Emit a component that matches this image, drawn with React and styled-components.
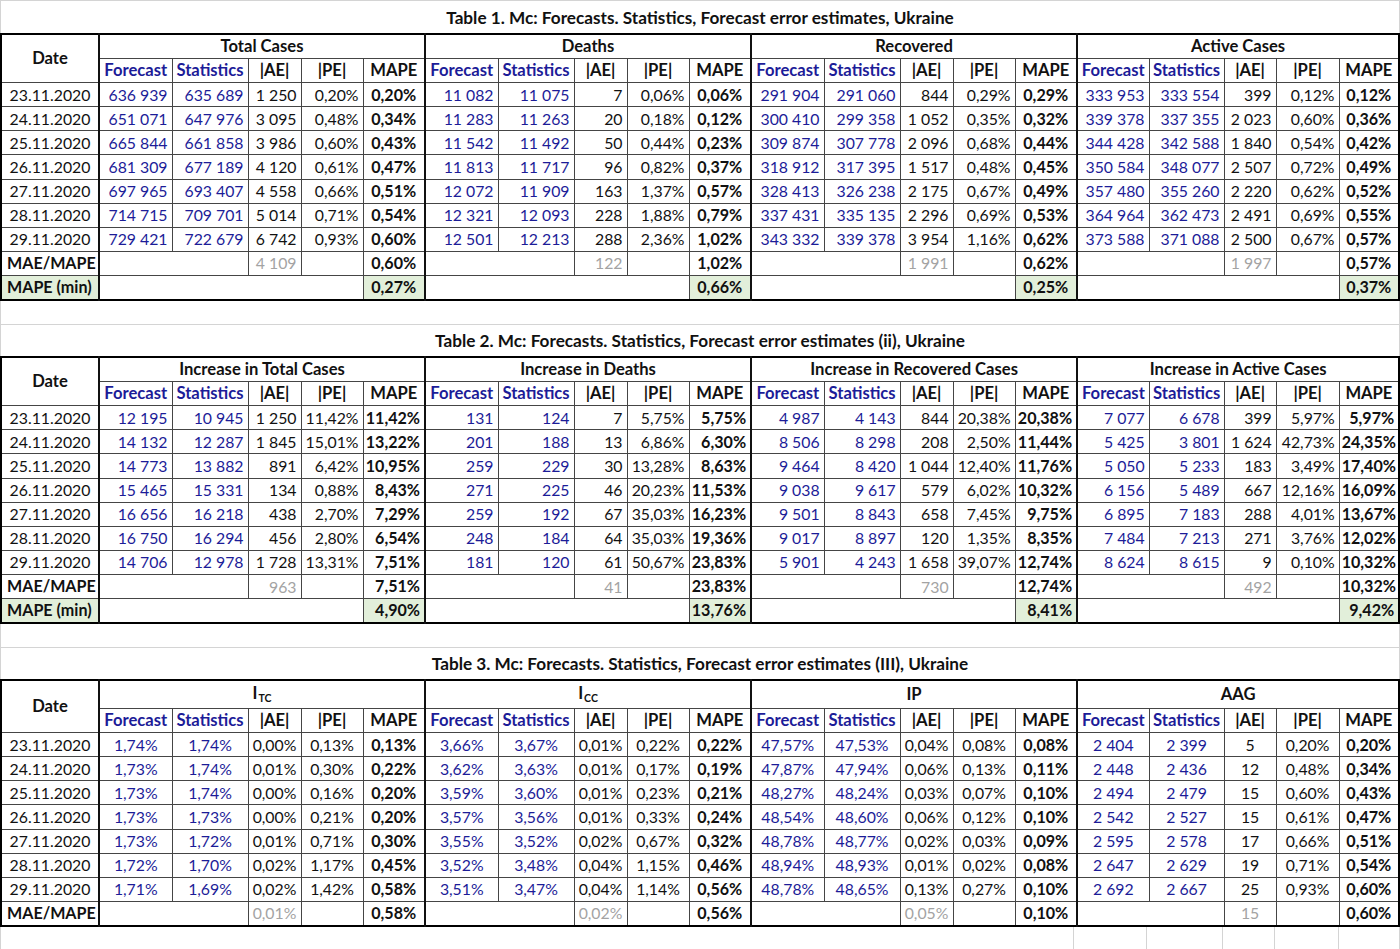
import React from "react";
import styled, { createGlobalStyle } from "styled-components";

const GlobalStyle = createGlobalStyle`
  body {
    margin: 0;
    background: #fff;
    font-family: Lato, "Noto Sans", sans-serif;
    color: #111;
  }
`;

const tones = {
  ink: "#111111",
  blue: "#1c1c98",
  gray: "#a3a3a3",
};

const widths = [
  [73, 76, 53, 62, 62],
  [73, 76, 53, 62, 62],
  [73, 76, 53, 62, 62],
  [72, 75, 52, 63, 60],
];

const Sheet = styled.div`
  width: 1398px;
  border-top: 1px solid #d4d4d4;
  border-left: 1px solid #d4d4d4;
  border-right: 1px solid #d4d4d4;
`;

const TitleBar = styled.div`
  height: ${(p) => p.$h}px;
  display: flex;
  align-items: center;
  justify-content: center;
  font-size: 17.2px;
  font-weight: 700;
`;

const Gap = styled.div`
  height: 23px;
  border-bottom: 1px solid #d4d4d4;
`;

const Grid = styled.table`
  width: 1398px;
  margin-left: -1px;
  border-collapse: collapse;
  table-layout: fixed;
  border: 2px solid #000;
  font-size: 15.8px;
`;

const Cell = styled.td`
  height: ${(p) => p.$h || 23.1}px;
  padding: 0 ${(p) => (p.$align === "right" ? 4 : 2)}px 0 ${(p) => (p.$align === "left" ? 5 : 2)}px;
  border: 1px solid #454545;
  border-left: ${(p) => (p.$edge ? "2px solid #111" : "1px solid #454545")};
  text-align: ${(p) => p.$align || "center"};
  color: ${(p) => tones[p.$tone || "ink"]};
  font-weight: ${(p) => (p.$bold ? 700 : 400)};
  font-size: ${(p) => (p.$bold ? 16.1 : 15.8)}px;
  background: ${(p) => (p.$green ? "#e2efda" : "transparent")};
  white-space: nowrap;
  overflow: hidden;
  line-height: 1;
`;

const HeadCell = styled(Cell).attrs({ as: "th", $bold: true })`
  font-size: 16.6px;
`;

const Sub = styled.sub`
  font-size: 10.5px;
  vertical-align: -3px;
  margin-left: 1px;
`;

const Tail = styled.div`
  height: 24px;
  display: flex;
  border-bottom: 1px solid #d4d4d4;
`;

const TailSpacer = styled.div`
  width: 1076px;
`;

const TailCell = styled.div`
  width: ${(p) => p.$w}px;
  border-left: 1px solid #d4d4d4;
`;

const split = (s) => s.split("|");

const dates = [
  "23.11.2020",
  "24.11.2020",
  "25.11.2020",
  "26.11.2020",
  "27.11.2020",
  "28.11.2020",
  "29.11.2020",
];

const table1 = {
  title: "Table 1. Mc: Forecasts. Statistics, Forecast error estimates, Ukraine",
  align: "right",
  mapeAlign: "center",
  groups: [
    {
      name: "Total Cases",
      rows: [
        "636 939|635 689|1 250|0,20%|0,20%",
        "651 071|647 976|3 095|0,48%|0,34%",
        "665 844|661 858|3 986|0,60%|0,43%",
        "681 309|677 189|4 120|0,61%|0,47%",
        "697 965|693 407|4 558|0,66%|0,51%",
        "714 715|709 701|5 014|0,71%|0,54%",
        "729 421|722 679|6 742|0,93%|0,60%",
      ],
      mae: "4 109",
      mape: "0,60%",
      min: "0,27%",
    },
    {
      name: "Deaths",
      rows: [
        "11 082|11 075|7|0,06%|0,06%",
        "11 283|11 263|20|0,18%|0,12%",
        "11 542|11 492|50|0,44%|0,23%",
        "11 813|11 717|96|0,82%|0,37%",
        "12 072|11 909|163|1,37%|0,57%",
        "12 321|12 093|228|1,88%|0,79%",
        "12 501|12 213|288|2,36%|1,02%",
      ],
      mae: "122",
      mape: "1,02%",
      min: "0,66%",
    },
    {
      name: "Recovered",
      rows: [
        "291 904|291 060|844|0,29%|0,29%",
        "300 410|299 358|1 052|0,35%|0,32%",
        "309 874|307 778|2 096|0,68%|0,44%",
        "318 912|317 395|1 517|0,48%|0,45%",
        "328 413|326 238|2 175|0,67%|0,49%",
        "337 431|335 135|2 296|0,69%|0,53%",
        "343 332|339 378|3 954|1,16%|0,62%",
      ],
      mae: "1 991",
      mape: "0,62%",
      min: "0,25%",
    },
    {
      name: "Active Cases",
      rows: [
        "333 953|333 554|399|0,12%|0,12%",
        "339 378|337 355|2 023|0,60%|0,36%",
        "344 428|342 588|1 840|0,54%|0,42%",
        "350 584|348 077|2 507|0,72%|0,49%",
        "357 480|355 260|2 220|0,62%|0,52%",
        "364 964|362 473|2 491|0,69%|0,55%",
        "373 588|371 088|2 500|0,67%|0,57%",
      ],
      mae: "1 997",
      mape: "0,57%",
      min: "0,37%",
    },
  ],
};

const table2 = {
  title: "Table 2. Mc: Forecasts. Statistics, Forecast error estimates (ii), Ukraine",
  align: "right",
  mapeAlign: "right",
  groups: [
    {
      name: "Increase in Total Cases",
      rows: [
        "12 195|10 945|1 250|11,42%|11,42%",
        "14 132|12 287|1 845|15,01%|13,22%",
        "14 773|13 882|891|6,42%|10,95%",
        "15 465|15 331|134|0,88%|8,43%",
        "16 656|16 218|438|2,70%|7,29%",
        "16 750|16 294|456|2,80%|6,54%",
        "14 706|12 978|1 728|13,31%|7,51%",
      ],
      mae: "963",
      mape: "7,51%",
      min: "4,90%",
    },
    {
      name: "Increase in Deaths",
      rows: [
        "131|124|7|5,75%|5,75%",
        "201|188|13|6,86%|6,30%",
        "259|229|30|13,28%|8,63%",
        "271|225|46|20,23%|11,53%",
        "259|192|67|35,03%|16,23%",
        "248|184|64|35,03%|19,36%",
        "181|120|61|50,67%|23,83%",
      ],
      mae: "41",
      mape: "23,83%",
      min: "13,76%",
    },
    {
      name: "Increase in Recovered Cases",
      rows: [
        "4 987|4 143|844|20,38%|20,38%",
        "8 506|8 298|208|2,50%|11,44%",
        "9 464|8 420|1 044|12,40%|11,76%",
        "9 038|9 617|579|6,02%|10,32%",
        "9 501|8 843|658|7,45%|9,75%",
        "9 017|8 897|120|1,35%|8,35%",
        "5 901|4 243|1 658|39,07%|12,74%",
      ],
      mae: "730",
      mape: "12,74%",
      min: "8,41%",
    },
    {
      name: "Increase in Active Cases",
      rows: [
        "7 077|6 678|399|5,97%|5,97%",
        "5 425|3 801|1 624|42,73%|24,35%",
        "5 050|5 233|183|3,49%|17,40%",
        "6 156|5 489|667|12,16%|16,09%",
        "6 895|7 183|288|4,01%|13,67%",
        "7 484|7 213|271|3,76%|12,02%",
        "8 624|8 615|9|0,10%|10,32%",
      ],
      mae: "492",
      mape: "10,32%",
      min: "9,42%",
    },
  ],
};

const table3 = {
  title: "Table 3. Mc: Forecasts. Statistics, Forecast error estimates (III), Ukraine",
  align: "center",
  mapeAlign: "center",
  headH: 27,
  groups: [
    {
      name: (
        <>
          I<Sub>TC</Sub>
        </>
      ),
      rows: [
        "1,74%|1,74%|0,00%|0,13%|0,13%",
        "1,73%|1,74%|0,01%|0,30%|0,22%",
        "1,73%|1,74%|0,00%|0,16%|0,20%",
        "1,73%|1,73%|0,00%|0,21%|0,20%",
        "1,73%|1,72%|0,01%|0,71%|0,30%",
        "1,72%|1,70%|0,02%|1,17%|0,45%",
        "1,71%|1,69%|0,02%|1,42%|0,58%",
      ],
      mae: "0,01%",
      mape: "0,58%",
    },
    {
      name: (
        <>
          I<Sub>CC</Sub>
        </>
      ),
      rows: [
        "3,66%|3,67%|0,01%|0,22%|0,22%",
        "3,62%|3,63%|0,01%|0,17%|0,19%",
        "3,59%|3,60%|0,01%|0,23%|0,21%",
        "3,57%|3,56%|0,01%|0,33%|0,24%",
        "3,55%|3,52%|0,02%|0,67%|0,32%",
        "3,52%|3,48%|0,04%|1,15%|0,46%",
        "3,51%|3,47%|0,04%|1,14%|0,56%",
      ],
      mae: "0,02%",
      mape: "0,56%",
    },
    {
      name: "IP",
      rows: [
        "47,57%|47,53%|0,04%|0,08%|0,08%",
        "47,87%|47,94%|0,06%|0,13%|0,11%",
        "48,27%|48,24%|0,03%|0,07%|0,10%",
        "48,54%|48,60%|0,06%|0,12%|0,10%",
        "48,78%|48,77%|0,02%|0,03%|0,09%",
        "48,94%|48,93%|0,01%|0,02%|0,08%",
        "48,78%|48,65%|0,13%|0,27%|0,10%",
      ],
      mae: "0,05%",
      mape: "0,10%",
    },
    {
      name: "AAG",
      rows: [
        "2 404|2 399|5|0,20%|0,20%",
        "2 448|2 436|12|0,48%|0,34%",
        "2 494|2 479|15|0,60%|0,43%",
        "2 542|2 527|15|0,61%|0,47%",
        "2 595|2 578|17|0,66%|0,51%",
        "2 647|2 629|19|0,71%|0,54%",
        "2 692|2 667|25|0,93%|0,60%",
      ],
      mae: "15",
      mape: "0,60%",
    },
  ],
};

const subHeads = ["Forecast", "Statistics", "|AE|", "|PE|", "MAPE"];

const ErrorTable = ({ data }) => {
  const { align, mapeAlign, groups } = data;
  const hasMin = groups[0].min !== undefined;
  return (
    <Grid>
      <colgroup>
        <col style={{ width: 98 }} />
        {widths.flat().map((w, i) => (
          <col key={i} style={{ width: w }} />
        ))}
      </colgroup>
      <thead>
        <tr>
          <HeadCell rowSpan={2}>Date</HeadCell>
          {groups.map((g, i) => (
            <HeadCell key={i} colSpan={5} $edge $h={data.headH}>
              {g.name}
            </HeadCell>
          ))}
        </tr>
        <tr>
          {groups.map((g, gi) =>
            subHeads.map((h, hi) => (
              <HeadCell
                key={`${gi}-${hi}`}
                $edge={hi === 0}
                $tone={hi < 2 ? "blue" : "ink"}
              >
                {h}
              </HeadCell>
            ))
          )}
        </tr>
      </thead>
      <tbody>
        {dates.map((d, ri) => (
          <tr key={d}>
            <Cell>{d}</Cell>
            {groups.map((g, gi) =>
              split(g.rows[ri]).map((v, ci) => (
                <Cell
                  key={`${gi}-${ci}`}
                  $edge={ci === 0}
                  $tone={ci < 2 ? "blue" : "ink"}
                  $bold={ci === 4}
                  $align={ci === 4 ? mapeAlign : align}
                >
                  {v}
                </Cell>
              ))
            )}
          </tr>
        ))}
        <tr>
          <Cell $bold $align="left">
            MAE/MAPE
          </Cell>
          {groups.map((g, gi) => (
            <React.Fragment key={gi}>
              <Cell colSpan={2} $edge />
              <Cell $tone="gray" $align={align}>
                {g.mae}
              </Cell>
              <Cell />
              <Cell $bold $align={mapeAlign}>
                {g.mape}
              </Cell>
            </React.Fragment>
          ))}
        </tr>
        {hasMin && (
          <tr>
            <Cell $bold $align="left" $green>
              MAPE (min)
            </Cell>
            {groups.map((g, gi) => (
              <React.Fragment key={gi}>
                <Cell colSpan={4} $edge />
                <Cell $bold $green $align={mapeAlign}>
                  {g.min}
                </Cell>
              </React.Fragment>
            ))}
          </tr>
        )}
      </tbody>
    </Grid>
  );
};

export default function App() {
  return (
    <>
      <GlobalStyle />
      <Sheet>
        <TitleBar $h={32}>{table1.title}</TitleBar>
        <ErrorTable data={table1} />
        <Gap />
        <TitleBar $h={31}>{table2.title}</TitleBar>
        <ErrorTable data={table2} />
        <Gap />
        <TitleBar $h={31}>{table3.title}</TitleBar>
        <ErrorTable data={table3} />
        <Tail>
          <TailSpacer />
          {widths[3].map((w, i) => (
            <TailCell key={i} $w={w} />
          ))}
        </Tail>
      </Sheet>
    </>
  );
}
